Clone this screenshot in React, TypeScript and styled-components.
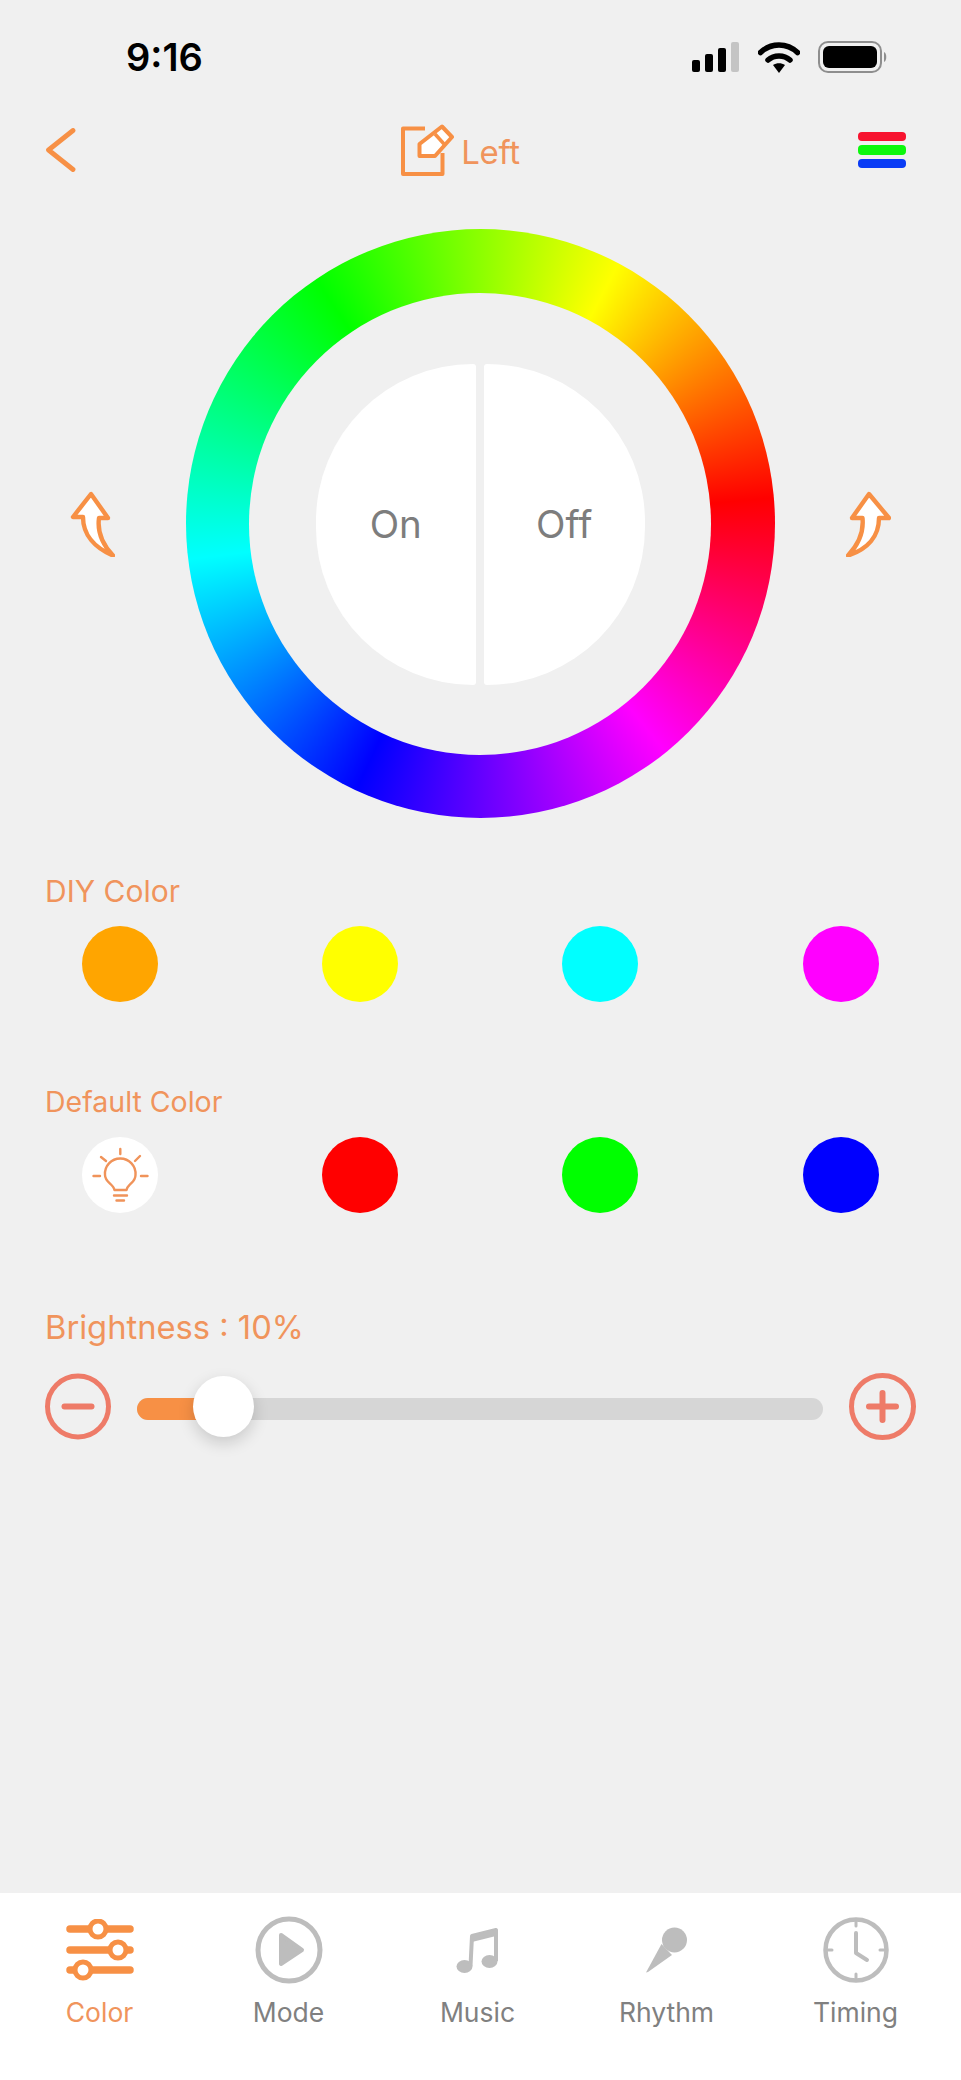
import React from "react";
import styled, { createGlobalStyle } from "styled-components";

const ORANGE = "#f79045";
const LABEL = "#f0945c";
const GREY_ICON = "#bdbdbd";
const BG = "#f0f0f0";

const GlobalStyle = createGlobalStyle`
  html, body {
    margin: 0;
    padding: 0;
    background: ${BG};
    font-family: "Inter", "Liberation Sans", sans-serif;
  }
`;

const Page = styled.div`
  width: 961px;
  height: 2080px;
  background: ${BG};
  display: flex;
  flex-direction: column;
  overflow: hidden;
`;

const StatusBar = styled.div`
  height: 114px;
  padding: 0 73px 0 126px;
  box-sizing: border-box;
  display: flex;
  align-items: center;
  justify-content: space-between;
`;
const Clock = styled.span`
  font-size: 38px;
  font-weight: 600;
  color: #000;
`;
const StatusIcons = styled.div`
  display: flex;
  align-items: center;
  gap: 18px;
`;

const NavBar = styled.div`
  height: 72px;
  padding: 0 55px 0 46px;
  display: flex;
  align-items: center;
  justify-content: space-between;
`;
const NavTitle = styled.div`
  display: flex;
  align-items: flex-end;
  gap: 7px;
  margin-right: 13px;
`;
const NavText = styled.span`
  font-size: 33px;
  font-weight: 400;
  line-height: 40px;
  letter-spacing: -0.3px;
  color: ${LABEL};
  margin-bottom: 4px;
`;
const ColorBars = styled.div`
  display: flex;
  flex-direction: column;
  gap: 4px;
`;
const ColorBar = styled.div<{ $color: string }>`
  width: 48px;
  height: 9.5px;
  border-radius: 4px;
  background: ${(p) => p.$color};
`;

const WheelRow = styled.div`
  margin-top: 43px;
  padding-right: 1px;
  display: flex;
  align-items: center;
  justify-content: center;
  gap: 71px;
`;
const Ring = styled.div`
  width: 589px;
  height: 589px;
  border-radius: 50%;
  background: conic-gradient(from 28deg, #ff0 0deg, #f00 57deg, #f0f 113deg, #00f 177deg, #0ff 235deg, #0f0 298deg, #ff0 360deg);
  display: flex;
  align-items: center;
  justify-content: center;
`;
const RingHole = styled.div`
  width: 462px;
  height: 462px;
  box-sizing: border-box;
  padding-top: 1px;
  border-radius: 50%;
  background: ${BG};
  display: flex;
  align-items: center;
  justify-content: center;
  gap: 8px;
`;
const HalfButton = styled.div<{ $side: "left" | "right" }>`
  width: 160.5px;
  height: 321px;
  background: #fff;
  color: #7d7d7d;
  font-size: 38.5px;
  font-weight: 400;
  display: flex;
  align-items: center;
  justify-content: center;
  border-radius: ${(p) => (p.$side === "left" ? "160.5px 3px 3px 160.5px" : "3px 160.5px 160.5px 3px")};
`;

const SectionLabel = styled.div<{ $top: number; $size: number }>`
  margin-top: ${(p) => p.$top}px;
  padding-left: 45px;
  font-size: ${(p) => p.$size}px;
  line-height: 36px;
  font-weight: 400;
  color: ${LABEL};
`;
const SwatchRow = styled.div`
  margin-top: 17px;
  display: grid;
  grid-template-columns: repeat(4, 240.2px);
`;
const Swatch = styled.div<{ $color: string }>`
  justify-self: center;
  width: 76px;
  height: 76px;
  border-radius: 50%;
  background: ${(p) => p.$color};
  display: flex;
  align-items: center;
  justify-content: center;
`;

const SliderRow = styled.div`
  margin-top: 28px;
  padding: 0 45px;
  display: flex;
  align-items: center;
  gap: 26px;
`;
const Track = styled.div`
  position: relative;
  flex: 1;
  height: 22px;
  margin-top: 4px;
  border-radius: 11px;
  background: #d6d6d6;
`;
const TrackFill = styled.div<{ $pct: number }>`
  width: ${(p) => p.$pct}%;
  height: 100%;
  border-radius: 11px 0 0 11px;
  background: ${ORANGE};
`;
const Thumb = styled.div<{ $pct: number }>`
  position: absolute;
  top: -22px;
  left: ${(p) => p.$pct}%;
  margin-left: -30px;
  width: 61px;
  height: 61px;
  border-radius: 50%;
  background: #fff;
  box-shadow: 0 6px 16px rgba(0, 0, 0, 0.16);
`;

const Spacer = styled.div`
  flex: 1;
`;

const TabBar = styled.div`
  height: 187px;
  box-sizing: border-box;
  background: #fff;
  padding: 23px 11px 0 5px;
  display: grid;
  grid-template-columns: repeat(5, 189px);
`;
const Tab = styled.div<{ $active?: boolean }>`
  display: flex;
  flex-direction: column;
  align-items: center;
  color: ${(p) => (p.$active ? "#f0945c" : "#808080")};
`;
const TabIcon = styled.div`
  height: 68px;
  display: flex;
  align-items: center;
  justify-content: center;
`;
const TabLabel = styled.span`
  margin-top: 13px;
  font-size: 26.5px;
  line-height: 30px;
  font-weight: 400;
`;

const SignalIcon = () => (
  <svg width="48" height="30" viewBox="0 0 48 30">
    <rect x="0" y="18" width="8" height="12" rx="2" fill="#000" />
    <rect x="13" y="12" width="8" height="18" rx="2" fill="#000" />
    <rect x="26" y="6" width="8" height="24" rx="2" fill="#000" />
    <rect x="39" y="0" width="8" height="30" rx="2" fill="#c4c4c4" />
  </svg>
);

const WifiIcon = () => (
  <svg width="42" height="32" viewBox="0 0 42 32">
    <path d="M2.5 11.5 C13 1.5 29 1.5 39.5 11.5" fill="none" stroke="#000" strokeWidth="5.5" strokeLinecap="round" />
    <path d="M10 19 C16 13.5 26 13.5 32 19" fill="none" stroke="#000" strokeWidth="5.5" strokeLinecap="round" />
    <path d="M15 24 C18.5 21.5 23.5 21.5 27 24 L21 32 Z" fill="#000" />
  </svg>
);

const BatteryIcon = () => (
  <svg width="70" height="32" viewBox="0 0 70 32">
    <rect x="1" y="1" width="62" height="30" rx="9" fill="none" stroke="#8e8e8e" strokeWidth="2" />
    <rect x="5" y="5" width="54" height="22" rx="6" fill="#000" />
    <path d="M66 11 C69 12 69 20 66 21 Z" fill="#8e8e8e" />
  </svg>
);

const BackIcon = () => (
  <svg width="30" height="44" viewBox="0 0 30 44">
    <path d="M27 2.5 L2.5 22 L27 41.5" fill="none" stroke={ORANGE} strokeWidth="4.8" strokeLinecap="round" strokeLinejoin="round" />
  </svg>
);

const EditIcon = () => (
  <svg width="53" height="52" viewBox="0 0 53 52">
    <path d="M24 4.5 H2 V50 H41.5 V29" fill="none" stroke={ORANGE} strokeWidth="4" strokeLinejoin="round" />
    <path d="M41 2.5 L51 13 L34 32 H18.5 V20 Z" fill="#fff" stroke={ORANGE} strokeWidth="4" strokeLinejoin="round" />
    <path d="M34 10 L43 20" stroke={ORANGE} strokeWidth="3.5" />
  </svg>
);

const LeftArrow = () => (
  <svg width="45" height="66" viewBox="0 0 45 66">
    <path d="M21 3 L3 26 H13 C13 44 25 57 43 64.5 C33 54 27 42 29 27 H38 Z" fill="#fff" stroke={ORANGE} strokeWidth="4.4" strokeLinejoin="round" />
  </svg>
);

const RightArrow = () => (
  <svg width="45" height="66" viewBox="0 0 45 66">
    <path d="M23 3 L43 27 H33 C33 45 22 58 2 64.5 C12 54 18 42 16.5 27 H6 Z" fill="#fff" stroke={ORANGE} strokeWidth="4.4" strokeLinejoin="round" />
  </svg>
);

const BulbIcon = () => (
  <svg width="76" height="76" viewBox="0 0 76 76" fill="none" stroke="#f0935a" strokeWidth="2.4" strokeLinecap="round" strokeLinejoin="round">
    <path d="M38.3 12 V17 M11.5 39 H18 M59 39 H65.5 M19 20 L24 24 M58 19 L53 24" />
    <path d="M32.5 53 C31.5 47 23 45.5 23 38 A15.3 15.3 0 1 1 53.5 38 C53.5 43 50.5 45 48 47.5 C46.5 49 45 50 44.5 53 Z" />
    <path d="M32 58.5 H45 M34.5 63.5 H42" />
  </svg>
);

const MinusIcon = () => (
  <svg width="66" height="67" viewBox="0 0 66 67" fill="none" stroke="#ee7b68" strokeLinecap="round">
    <circle cx="33" cy="33.5" r="30.5" strokeWidth="5" />
    <path d="M19.5 33.5 H46.5" strokeWidth="6" />
  </svg>
);

const PlusIcon = () => (
  <svg width="67" height="67" viewBox="0 0 67 67" fill="none" stroke="#ee7b68" strokeLinecap="round">
    <circle cx="33.5" cy="33.5" r="31" strokeWidth="5" />
    <path d="M20 33.5 H47 M33.5 20 V47" strokeWidth="6" />
  </svg>
);

const SlidersIcon = () => (
  <svg width="68" height="62" viewBox="0 0 68 62" fill="none" strokeLinecap="round">
    <path d="M4 10 H64 M4 31 H64 M4 51 H64" stroke={ORANGE} strokeWidth="7.5" />
    <circle cx="32" cy="10" r="8" fill="#fff" stroke={ORANGE} strokeWidth="5" />
    <circle cx="52" cy="31" r="8" fill="#fff" stroke={ORANGE} strokeWidth="5" />
    <circle cx="17" cy="51" r="8" fill="#fff" stroke={ORANGE} strokeWidth="5" />
  </svg>
);

const PlayIcon = () => (
  <svg width="68" height="68" viewBox="0 0 68 68">
    <circle cx="34" cy="34" r="31" fill="none" stroke={GREY_ICON} strokeWidth="5" />
    <path d="M26 19 L47 34 L26 48 Z" fill={GREY_ICON} stroke={GREY_ICON} strokeWidth="4" strokeLinejoin="round" />
  </svg>
);

const NoteIcon = () => (
  <svg width="44" height="47" viewBox="0 0 44 47">
    <ellipse cx="8.5" cy="39.5" rx="8" ry="6.5" fill={GREY_ICON} />
    <ellipse cx="33.5" cy="34.5" rx="8" ry="6.5" fill={GREY_ICON} />
    <path d="M14.5 39 L16 9 L40 3 V34" fill="none" stroke={GREY_ICON} strokeWidth="4" strokeLinejoin="round" />
    <path d="M16 8 L40 2.5 V9 L16 15 Z" fill={GREY_ICON} />
  </svg>
);

const MicIcon = () => (
  <svg width="41" height="46" viewBox="0 0 41 46">
    <circle cx="28.5" cy="13" r="12.5" fill={GREY_ICON} />
    <path d="M15.5 17 L26 28 L2 45 L0 45.5 Z" fill={GREY_ICON} />
  </svg>
);

const ClockIcon = () => (
  <svg width="66" height="66" viewBox="0 0 66 66" fill="none" stroke={GREY_ICON} strokeLinecap="round" strokeLinejoin="round">
    <circle cx="33" cy="33" r="30.5" strokeWidth="4.5" />
    <path d="M33 5 V9 M33 57 V61 M5 33 H9 M57 33 H61" strokeWidth="3" />
    <path d="M33 16 V36 L44 43" strokeWidth="4" />
  </svg>
);

const diyColors = ["#ffa500", "#ffff00", "#00ffff", "#ff00ff"];
const defaultColors = ["#ff0000", "#00ff00", "#0000ff"];
const brightnessPos = 12.5;

export default function App() {
  return (
    <Page>
      <GlobalStyle />
      <StatusBar>
        <Clock>9:16</Clock>
        <StatusIcons>
          <SignalIcon />
          <WifiIcon />
          <BatteryIcon />
        </StatusIcons>
      </StatusBar>

      <NavBar>
        <BackIcon />
        <NavTitle>
          <EditIcon />
          <NavText>Left</NavText>
        </NavTitle>
        <ColorBars>
          <ColorBar $color="#f7132f" />
          <ColorBar $color="#0cf80c" />
          <ColorBar $color="#0a3cf5" />
        </ColorBars>
      </NavBar>

      <WheelRow>
        <LeftArrow />
        <Ring>
          <RingHole>
            <HalfButton $side="left">On</HalfButton>
            <HalfButton $side="right">Off</HalfButton>
          </RingHole>
        </Ring>
        <RightArrow />
      </WheelRow>

      <SectionLabel $top={55} $size={30}>DIY Color</SectionLabel>
      <SwatchRow>
        {diyColors.map((c) => (
          <Swatch key={c} $color={c} />
        ))}
      </SwatchRow>

      <SectionLabel $top={82} $size={28.5}>Default Color</SectionLabel>
      <SwatchRow>
        <Swatch $color="#fff">
          <BulbIcon />
        </Swatch>
        {defaultColors.map((c) => (
          <Swatch key={c} $color={c} />
        ))}
      </SwatchRow>

      <SectionLabel $top={96} $size={32.7}>Brightness : 10%</SectionLabel>
      <SliderRow>
        <MinusIcon />
        <Track>
          <TrackFill $pct={brightnessPos} />
          <Thumb $pct={brightnessPos} />
        </Track>
        <PlusIcon />
      </SliderRow>

      <Spacer />

      <TabBar>
        <Tab $active>
          <TabIcon>
            <SlidersIcon />
          </TabIcon>
          <TabLabel>Color</TabLabel>
        </Tab>
        <Tab>
          <TabIcon>
            <PlayIcon />
          </TabIcon>
          <TabLabel>Mode</TabLabel>
        </Tab>
        <Tab>
          <TabIcon>
            <NoteIcon />
          </TabIcon>
          <TabLabel>Music</TabLabel>
        </Tab>
        <Tab>
          <TabIcon>
            <MicIcon />
          </TabIcon>
          <TabLabel>Rhythm</TabLabel>
        </Tab>
        <Tab>
          <TabIcon>
            <ClockIcon />
          </TabIcon>
          <TabLabel>Timing</TabLabel>
        </Tab>
      </TabBar>
    </Page>
  );
}
